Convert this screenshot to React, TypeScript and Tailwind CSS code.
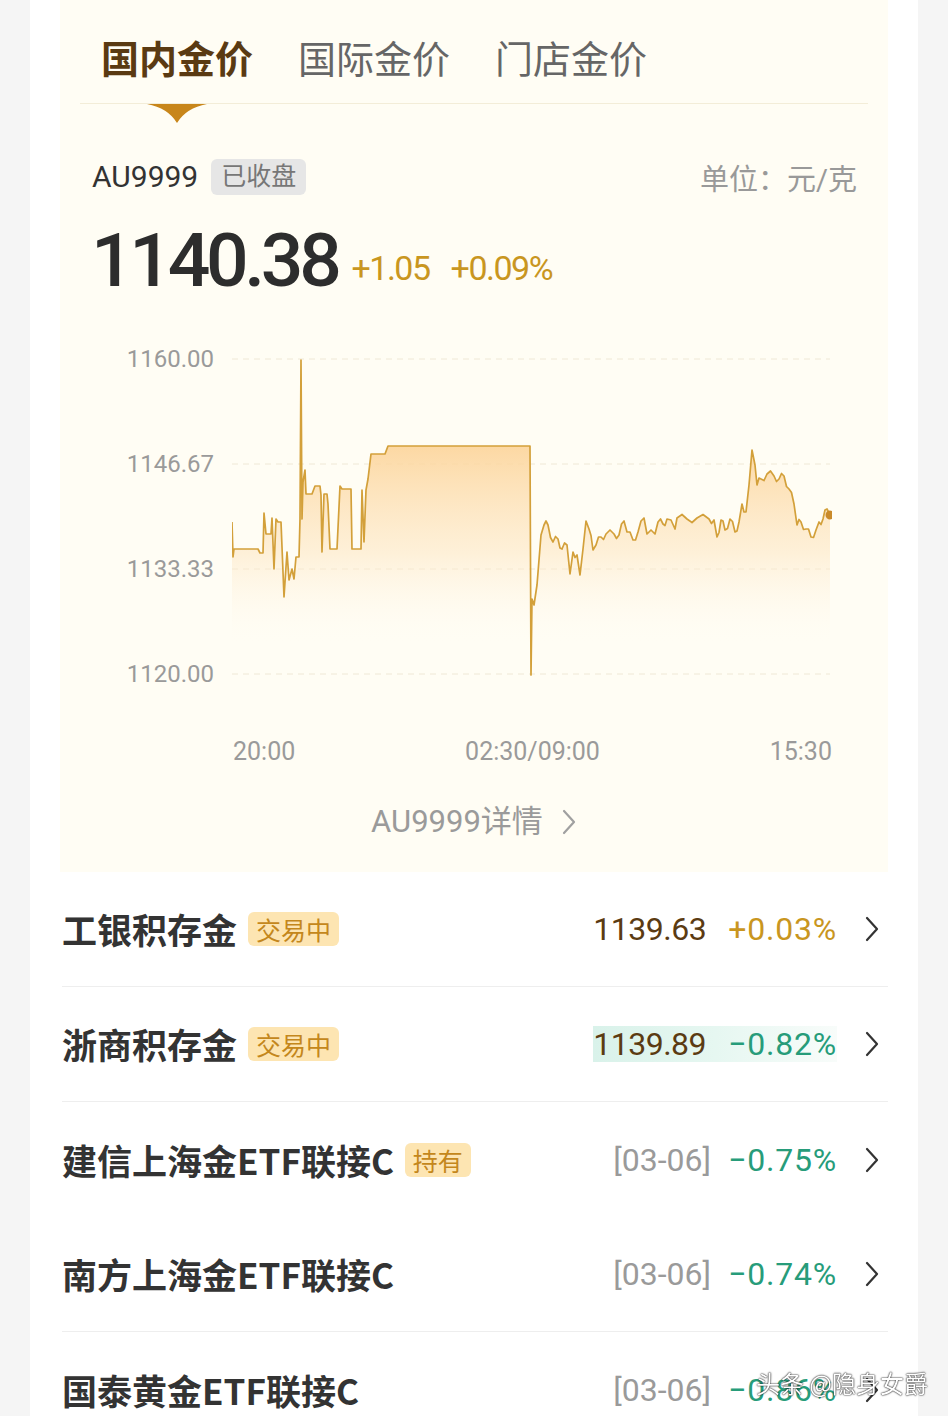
import React from "react";

// price line, in page coordinates of the chart box (x 232-832, y 340-690)
const basePts: [number, number][] = [
  [232, 520], [233, 555], [234, 547], [258, 547], [260, 551], [263, 551], [264, 511], [266, 532],
  [271, 532], [272, 516], [274, 567], [276, 517], [278, 520], [281, 520], [284, 595], [287, 550],
  [289, 578], [292, 567], [294, 577], [296, 555], [299, 555], [300, 517], [301, 358], [302, 517],
  [303, 480], [305, 468], [306, 492], [312, 492], [315, 484], [320, 484], [321, 493], [322, 550],
  [324, 492], [327, 492], [328, 502], [330, 547], [337, 547], [340, 484], [342, 487], [351, 487],
  [352, 547], [361, 547], [362, 488], [364, 540], [366, 488], [368, 477], [371, 452], [385, 452],
  [388, 444], [530, 444], [531, 673], [532, 597], [534, 603], [537, 583], [539, 558], [541, 533],
  [544, 523], [548, 523], [553, 540], [558, 537], [562, 547], [567, 543], [570, 572], [573, 550],
  [577, 553], [580, 573], [583, 547], [586, 519], [589, 527], [593, 548], [596, 543], [601, 535],
  [606, 532], [614, 532], [619, 533], [624, 519], [627, 530], [633, 538], [638, 530], [644, 516],
  [647, 532], [655, 532], [658, 520], [663, 522], [667, 517], [675, 527], [677, 516], [687, 517],
  [697, 516], [709, 517], [714, 518], [717, 535], [721, 518], [725, 528], [730, 517], [735, 530],
  [739, 520], [742, 502], [746, 510], [749, 483], [752, 448], [755, 463], [757, 483], [761, 477],
  [767, 472], [774, 474], [779, 477], [784, 474], [789, 487], [794, 502], [797, 523], [801, 520],
  [806, 527], [811, 535], [816, 528], [819, 520], [823, 517], [827, 507], [830, 513],
];

// add a bit of tick noise on the day session
const linePts: [number, number][] = [];
basePts.forEach((p, i) => {
  const next = basePts[i + 1];
  linePts.push(p);
  if (next && p[0] >= 540 && next[0] - p[0] >= 4) {
    const mx = (p[0] + next[0]) / 2;
    const my = (p[1] + next[1]) / 2 + (i % 2 ? 4 : -4);
    linePts.push([mx, my]);
  }
});

const Chart = () => {
  const line = linePts.map(([x, y], i) => `${i ? "L" : "M"}${x} ${y}`).join(" ");
  const area = `${line} L830 672 L232 672 Z`;
  const grid = [357, 462, 567, 672];
  return (
    <svg width="600" height="350" viewBox="232 340 600 350" className="block">
      <defs>
        <linearGradient id="goldFill" gradientUnits="userSpaceOnUse" x1="0" y1="444" x2="0" y2="640">
          <stop offset="0" stopColor="#fcd49a" stopOpacity="0.9" />
          <stop offset="0.55" stopColor="#fde6c2" stopOpacity="0.55" />
          <stop offset="1" stopColor="#fffaf0" stopOpacity="0" />
        </linearGradient>
      </defs>
      {grid.map((y) => (
        <line key={y} x1="232" x2="830" y1={y} y2={y} stroke="#efe8d6" strokeWidth="1" strokeDasharray="6 5" />
      ))}
      <path d={area} fill="url(#goldFill)" />
      <path d={line} fill="none" stroke="#d3a03a" strokeWidth="1.7" strokeLinejoin="round" />
      <circle cx="830" cy="513" r="4.5" fill="#c98a2a" />
    </svg>
  );
};

const Chevron = ({ color = "#333" }: { color?: string }) => (
  <svg width="16" height="28" viewBox="0 0 16 28" className="block">
    <polyline points="3,3 13,14 3,25" fill="none" stroke={color} strokeWidth="2.2" strokeLinecap="round" strokeLinejoin="round" />
  </svg>
);

type Row = {
  name: string;
  badge?: string;
  price?: string;
  date?: string;
  change: string;
  up?: boolean;
  flash?: boolean;
  line: boolean;
};

const rows: Row[] = [
  { name: "工银积存金", badge: "交易中", price: "1139.63", change: "+0.03%", up: true, line: true },
  { name: "浙商积存金", badge: "交易中", price: "1139.89", change: "\u22120.82%", flash: true, line: true },
  { name: "建信上海金ETF联接C", badge: "持有", date: "[03-06]", change: "\u22120.75%", line: false },
  { name: "南方上海金ETF联接C", date: "[03-06]", change: "\u22120.74%", line: true },
  { name: "国泰黄金ETF联接C", date: "[03-06]", change: "\u22120.86%", line: false },
];

export default function App() {
  return (
    <div className="min-h-screen w-full bg-[#f5f5f5] font-['Roboto','Noto_Sans_CJK_SC',sans-serif]">
      <div className="mx-[30px] bg-white">
        {/* gold panel */}
        <section className="mx-[30px] bg-[#fffdf4] pb-[35px]">
          <div className="flex h-[103px] gap-[45px] pl-[41px] pt-[38px] font-['Noto_Sans_CJK_SC',sans-serif] text-[38px] leading-[38px]">
            <span className="font-bold text-[#5a3a12]">国内金价</span>
            <span className="text-[#666]">国际金价</span>
            <span className="text-[#666]">门店金价</span>
          </div>
          <div className="mx-[20px] h-px bg-[#f3edd8]" />
          <svg width="60" height="19" viewBox="0 0 60 19" className="ml-[87px] block">
            <path d="M0 0 H60 Q39 4 30 19 Q21 4 0 0 Z" fill="#c8861a" />
          </svg>

          <div className="mt-[36px] flex h-[36px] items-center justify-between pl-[32px] pr-[31px]">
            <div className="flex items-center gap-[13px]">
              <span className="text-[30px] leading-[36px] text-[#333]">AU9999</span>
              <span className="h-[36px] rounded-[6px] bg-[#e6e6e6] px-[10px] text-[25px] leading-[36px] text-[#777]">已收盘</span>
            </div>
            <span className="mt-[6px] text-[29px] leading-[36px] text-[#999]">单位：元/克</span>
          </div>

          <div className="mt-[24px] flex h-[82px] items-end pl-[31px]">
            <span className="text-[75px] font-medium leading-[82px] tracking-[-4.3px] text-[#2d2d2d]">1140.38</span>
            <div className="mb-[14px] ml-[14px] flex gap-[21px] text-[34px] leading-[37px] tracking-[-1.5px] text-[#c9961f]">
              <span>+1.05</span>
              <span>+0.09%</span>
            </div>
          </div>

          <div className="mt-[41px] flex">
            <div className="flex h-[344px] w-[154px] flex-col justify-between pt-[5px] text-right text-[24px] leading-[24px] text-[#9a9a9a]">
              <span>1160.00</span>
              <span>1146.67</span>
              <span>1133.33</span>
              <span>1120.00</span>
            </div>
            <div className="ml-[18px]">
              <Chart />
            </div>
          </div>

          <div className="ml-[173px] mt-[48px] flex w-[599px] justify-between text-[25px] leading-[24px] text-[#9a9a9a]">
            <span>20:00</span>
            <span>02:30/09:00</span>
            <span>15:30</span>
          </div>

          <div className="mt-[43px] flex items-center justify-center gap-[18px] text-[31px] leading-[30px] text-[#9a9a9a]">
            <span>AU9999详情</span>
            <Chevron color="#a0a0a0" />
          </div>
        </section>

        {/* product list */}
        <div className="ml-[32px] mr-[30px]">
          {rows.map((r) => (
            <div
              key={r.name}
              className={`flex h-[115px] items-center ${r.line ? "border-b border-[#eeeeee]" : ""}`}
            >
              <span className="font-['Noto_Sans_CJK_SC',sans-serif] text-[35px] font-bold leading-[40px] text-[#333]">
                {r.name}
              </span>
              {r.badge && (
                <span className="ml-[11px] h-[34px] rounded-[6px] bg-[#fde5b2] px-[8px] font-['Noto_Sans_CJK_SC',sans-serif] text-[25px] leading-[34px] text-[#c4871c]">
                  {r.badge}
                </span>
              )}
              <div className="ml-auto flex items-center">
                <div
                  className={`flex h-[36px] items-center text-[32px] leading-[36px] ${
                    r.flash ? "bg-gradient-to-r from-[#d9f2ea] via-[#e6f7f1] to-[#f8fcfa]" : ""
                  } ${r.date ? "gap-[17px]" : "gap-[22px]"}`}
                >
                  {r.price && <span className="tracking-[-0.5px] text-[#5b3b12]">{r.price}</span>}
                  {r.date && <span className="text-[#9a9a9a]">{r.date}</span>}
                  <span className={`tracking-[0.8px] ${r.up ? "text-[#c9961f]" : "text-[#279c7a]"}`}>{r.change}</span>
                </div>
                <div className="ml-[27px] mr-[8px]">
                  <Chevron />
                </div>
              </div>
            </div>
          ))}
        </div>
      </div>

      <div className="fixed bottom-[18px] right-[20px] font-['Noto_Sans_CJK_SC',sans-serif] text-[24px] leading-[30px] text-white [text-shadow:0_0_2px_rgba(0,0,0,0.9),0_0_1px_rgba(0,0,0,0.9)]">
        头条 @隐身女爵
      </div>
    </div>
  );
}
